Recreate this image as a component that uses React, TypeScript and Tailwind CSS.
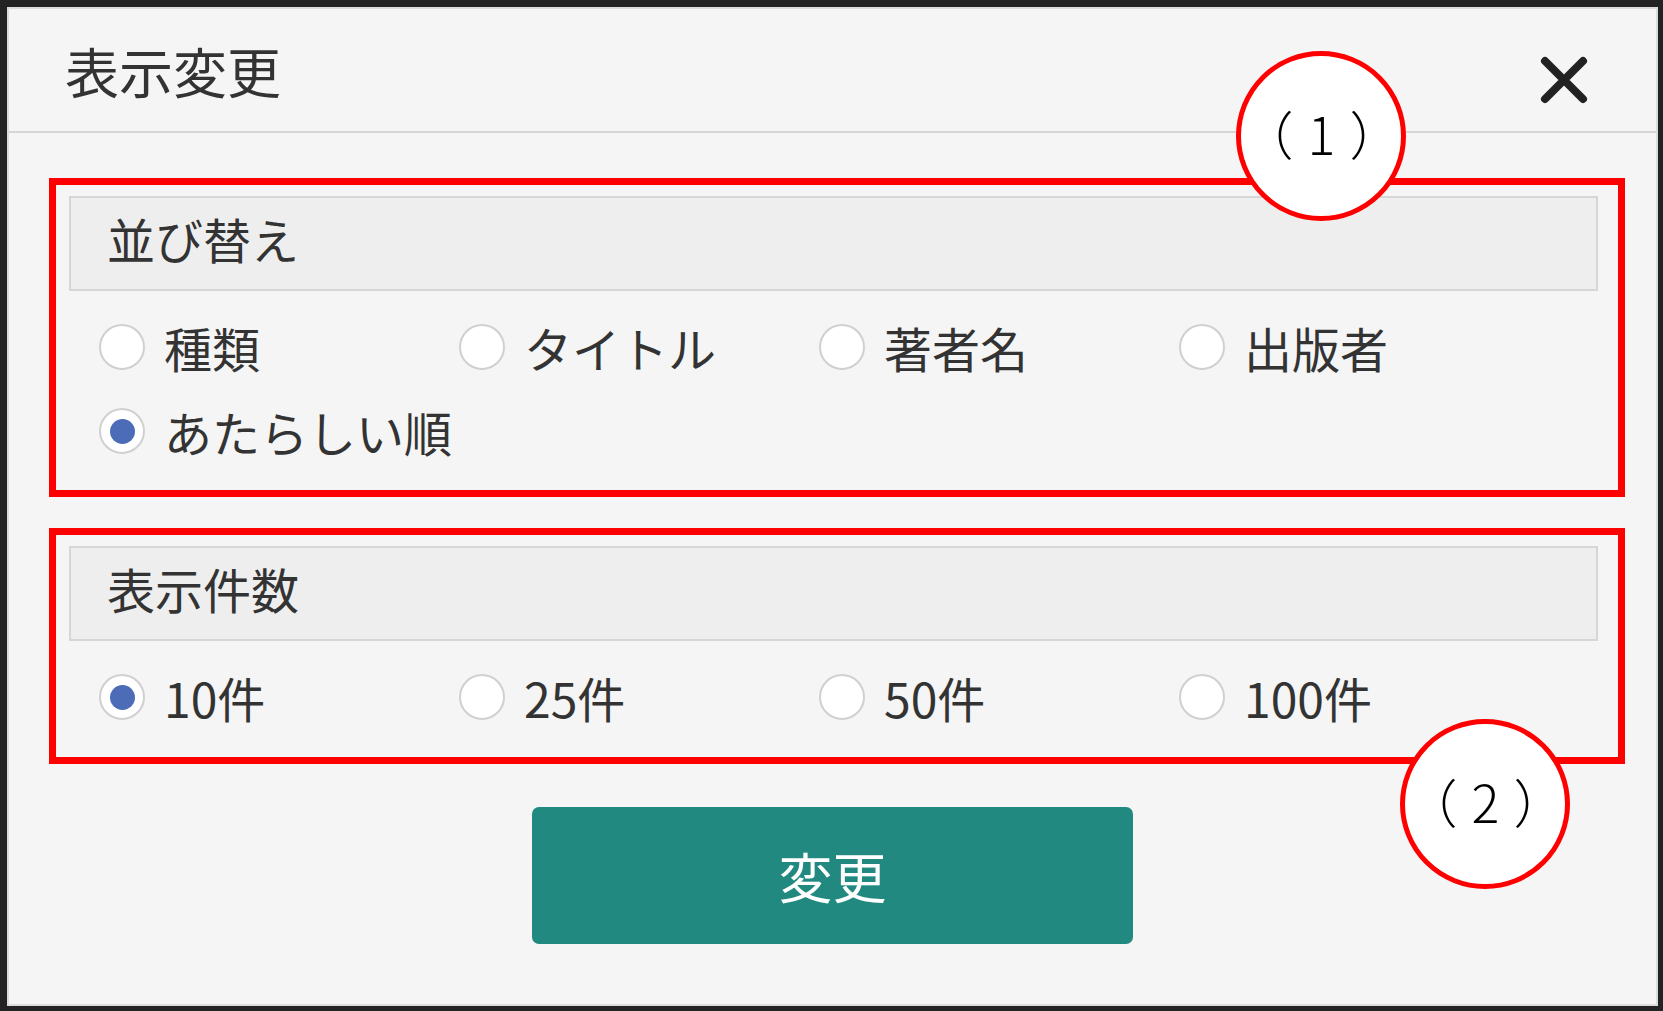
const sortOptions = ["種類", "タイトル", "著者名", "出版者", "あたらしい順"];
const countOptions = ["10件", "25件", "50件", "100件"];

const Radio = ({ label, checked }: { label: string; checked?: boolean }) => (
  <label className="flex h-[84px] items-center gap-[19px]">
    <span className="flex h-[46px] w-[46px] items-center justify-center rounded-full border-2 border-[#d0d0d0] bg-white">
      {checked && <span className="h-[25px] w-[25px] rounded-full bg-[#4c6cb8]" />}
    </span>
    <span className="text-[48px] leading-none text-[#333]">{label}</span>
  </label>
);

const Section = ({
  title,
  options,
  selected,
  className,
}: {
  title: string;
  options: string[];
  selected: string;
  className: string;
}) => (
  <div className={`ml-[40px] mr-[31px] border-[7px] border-[#ff0000] pl-[13px] pr-[20px] pt-[11px] ${className}`}>
    <div className="flex h-[95px] items-center border-2 border-[#d6d6d6] bg-[#eeeeee] pb-[11px] pl-[36px]">
      <span className="text-[48px] leading-none text-[#333]">{title}</span>
    </div>
    <div className="grid grid-cols-[360px_360px_360px_360px] pl-[30px] pt-[14px]">
      {options.map((o) => (
        <Radio key={o} label={o} checked={o === selected} />
      ))}
    </div>
  </div>
);

const Callout = ({ text, className }: { text: string; className: string }) => (
  <div
    className={`absolute flex h-[170px] w-[170px] items-center justify-center rounded-full border-[5px] border-[#ff0000] bg-white pb-[6px] pl-[15px] ${className}`}
  >
    <span className="text-[52px] font-light leading-none tracking-[14px] text-black">{text}</span>
  </div>
);

export default function App() {
  return (
    <div className="relative h-[1011px] w-[1663px] bg-[#232323] pb-[5px] pl-[7px] pr-[5px] pt-[7px] font-['Noto_Sans_CJK_JP','Noto_Sans',sans-serif]">
      <div className="flex h-full flex-col border-2 border-[#dcdcdc] bg-[#f5f5f5]">
        <header className="flex h-[124px] items-center justify-between border-b-2 border-[#d6d6d6] pl-[56px] pr-[68px] pt-[1px]">
          <h1 className="text-[54px] font-normal leading-none text-[#333]">表示変更</h1>
          <button className="mt-[18px]" aria-label="close">
            <svg width="48" height="48" viewBox="0 0 48 48">
              <path d="M5 5L43 43M43 5L5 43" stroke="#222" strokeWidth="8" strokeLinecap="round" />
            </svg>
          </button>
        </header>

        <Section title="並び替え" options={sortOptions} selected="あたらしい順" className="mt-[45px] pb-[17px]" />
        <Section title="表示件数" options={countOptions} selected="10件" className="mt-[31px] pb-[18px]" />

        <div className="mt-[43px] flex justify-center">
          <button className="flex h-[137px] w-[601px] items-center justify-center rounded-[7px] bg-[#21897f] text-[54px] leading-none text-white">
            変更
          </button>
        </div>
      </div>

      <Callout text="（1）" className="left-[1236px] top-[51px]" />
      <Callout text="（2）" className="left-[1400px] top-[719px]" />
    </div>
  );
}
